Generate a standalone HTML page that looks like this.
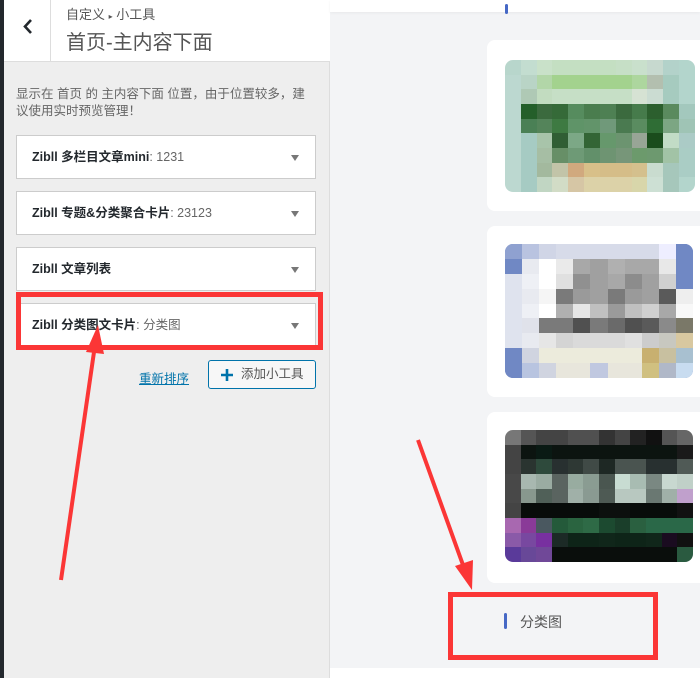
<!DOCTYPE html>
<html><head><meta charset="utf-8"><style>
*{margin:0;padding:0;box-sizing:border-box}
body{width:700px;height:678px;overflow:hidden;position:relative;background:#f3f4f6;font-family:"Liberation Sans","Noto Sans CJK SC",sans-serif}
.left{position:absolute;left:0;top:0;width:330px;height:678px;background:#eeeeee;border-right:1px solid #ddd}
.stripe{position:absolute;left:0;top:0;width:4px;height:678px;background:#23282d}
.hdr{position:absolute;left:4px;top:0;width:326px;height:62px;background:#fff;border-bottom:1px solid #ddd}
.back{position:absolute;left:0;top:0;width:47px;height:62px;border-right:1px solid #ddd}
.crumb{position:absolute;left:62px;top:4px;font-size:13px;color:#555}
.title{position:absolute;left:62px;top:26px;font-size:20px;color:#555}
.desc{position:absolute;left:16px;top:86px;width:300px;font-size:12.5px;color:#666;line-height:17px}
.w{position:absolute;left:16px;width:300px;height:44px;background:#fff;border:1px solid #ccc;font-size:12.5px;font-weight:bold;color:#23282d;padding-left:15px;line-height:42px}
.w span{color:#666;font-weight:normal}
.w:after{content:"";position:absolute;right:16px;top:19px;border-left:4px solid transparent;border-right:4px solid transparent;border-top:6px solid #777}
.red{position:absolute;border:5px solid #fb3636}
.link{position:absolute;left:139px;top:368px;font-size:12.5px;color:#0073aa;text-decoration:underline}
.btn{position:absolute;left:208px;top:360px;width:108px;height:29px;border:1px solid #0073aa;border-radius:3px;background:#f7f7f7;font-size:12.5px;color:#555;line-height:27px;padding-left:32px}
.topbar{position:absolute;left:330px;top:0;width:370px;height:12px;background:#fff;box-shadow:0 1px 3px rgba(0,0,0,.05)}
.card{position:absolute;left:487px;width:220px;height:171px;background:#fff;border-radius:8px}
.img{position:absolute;left:505px;display:grid;border-radius:8px;overflow:hidden}
.img i{display:block}
.bar{position:absolute;width:3px;height:14px;border-radius:2px;background:#4668c5}
.bottom{position:absolute;left:330px;top:668px;width:370px;height:10px;background:#fff}
</style></head><body>
<div class="left">
<div class="stripe"></div>
<div class="hdr"><div class="back"><svg width="47" height="62"><path d="M27 20 L21 26.5 L27 33" fill="none" stroke="#23282d" stroke-width="2.6"/></svg></div><div class="crumb">自定义 <span style="font-size:8px">▸</span> 小工具</div><div class="title">首页-主内容下面</div></div>
<div class="desc">显示在 首页 的 主内容下面 位置，由于位置较多，建议使用实时预览管理！</div>
<div class="w" style="top:135px">Zibll 多栏目文章mini<span>: 1231</span></div>
<div class="w" style="top:191px">Zibll 专题&amp;分类聚合卡片<span>: 23123</span></div>
<div class="w" style="top:247px">Zibll 文章列表</div>
<div class="w" style="top:303px">Zibll 分类图文卡片<span>: 分类图</span></div>
<div class="link">重新排序</div>
<div class="btn"><svg style="position:absolute;left:12px;top:8px" width="12" height="12"><path d="M6 0V12M0 6H12" stroke="#0073aa" stroke-width="2.6"/></svg>添加小工具</div>
</div>
<div class="topbar"></div>
<div class="bar" style="left:505px;top:4px;height:10px"></div>
<div class="card" style="top:40px"></div>
<div class="card" style="top:226px"></div>
<div class="card" style="top:412px"></div>
<div class="img" style="top:60px;width:190px;height:132px;grid-template-columns:repeat(12,1fr);grid-template-rows:repeat(9,1fr)">
<i style="background:#b8d6cc"></i><i style="background:#c3ddd0"></i><i style="background:#c9e1c9"></i><i style="background:#c4dfc2"></i><i style="background:#c4dfc2"></i><i style="background:#c4dfc2"></i><i style="background:#c4dfc2"></i><i style="background:#c6dfc6"></i><i style="background:#c9e0cc"></i><i style="background:#c7d9cf"></i><i style="background:#b3d2ca"></i><i style="background:#b3d5cc"></i>
<i style="background:#bcd8d0"></i><i style="background:#b9d4c6"></i><i style="background:#b2d6a8"></i><i style="background:#a3d28e"></i><i style="background:#a3d28e"></i><i style="background:#a3d28e"></i><i style="background:#a3d28e"></i><i style="background:#a3d28e"></i><i style="background:#add69e"></i><i style="background:#b3bfaf"></i><i style="background:#a6cbbf"></i><i style="background:#b3d5cc"></i>
<i style="background:#bcd8d0"></i><i style="background:#afc9b5"></i><i style="background:#c2dcc0"></i><i style="background:#c6dfc6"></i><i style="background:#c6dfc6"></i><i style="background:#c6dfc6"></i><i style="background:#c6dfc6"></i><i style="background:#c6dfc6"></i><i style="background:#d6e2d3"></i><i style="background:#cbdcd2"></i><i style="background:#a6cbbf"></i><i style="background:#b3d5cc"></i>
<i style="background:#bcd8d0"></i><i style="background:#245f2a"></i><i style="background:#3b6a3e"></i><i style="background:#356a38"></i><i style="background:#568c5e"></i><i style="background:#4a7d4e"></i><i style="background:#4e8053"></i><i style="background:#3b6a3e"></i><i style="background:#467b4b"></i><i style="background:#2c5f2e"></i><i style="background:#5a8a5e"></i><i style="background:#a3c8bd"></i>
<i style="background:#bcd8d0"></i><i style="background:#4a8055"></i><i style="background:#54845a"></i><i style="background:#3e7a42"></i><i style="background:#5f9468"></i><i style="background:#62946a"></i><i style="background:#70997a"></i><i style="background:#4a7a50"></i><i style="background:#5a8c60"></i><i style="background:#2f6d35"></i><i style="background:#7ca683"></i><i style="background:#9fc4b5"></i>
<i style="background:#bcd8d0"></i><i style="background:#a6cbc3"></i><i style="background:#a8c4aa"></i><i style="background:#305e34"></i><i style="background:#7ca886"></i><i style="background:#336535"></i><i style="background:#66986c"></i><i style="background:#6c9470"></i><i style="background:#98a596"></i><i style="background:#1a4c1c"></i><i style="background:#c2dcc6"></i><i style="background:#abcbc6"></i>
<i style="background:#bcd8d0"></i><i style="background:#a6cbc3"></i><i style="background:#a6bea4"></i><i style="background:#678f67"></i><i style="background:#6e9a76"></i><i style="background:#62906a"></i><i style="background:#6e9472"></i><i style="background:#779679"></i><i style="background:#6c9a6c"></i><i style="background:#6d996f"></i><i style="background:#a2c3a6"></i><i style="background:#aacdc5"></i>
<i style="background:#bcd8d0"></i><i style="background:#a6cbc3"></i><i style="background:#a3b99e"></i><i style="background:#c2c4a8"></i><i style="background:#d1a97e"></i><i style="background:#d8c089"></i><i style="background:#d5bd88"></i><i style="background:#d5bd88"></i><i style="background:#d4c08d"></i><i style="background:#c9dccf"></i><i style="background:#a6c7bb"></i><i style="background:#aacdc5"></i>
<i style="background:#bcd8d0"></i><i style="background:#a6cbc3"></i><i style="background:#c1d6c3"></i><i style="background:#d2dcc6"></i><i style="background:#d6c6a5"></i><i style="background:#dcd2a8"></i><i style="background:#dcd2a8"></i><i style="background:#dcd2a8"></i><i style="background:#d8d6aa"></i><i style="background:#cde0d4"></i><i style="background:#a6c7bb"></i><i style="background:#b3d5cc"></i>
</div>
<div class="img" style="top:244px;width:188px;height:134px;background:#6f86c4;grid-template-columns:repeat(11,1fr);grid-template-rows:repeat(9,1fr)">
<i style="background:#8fa1d0"></i><i style="background:#b9c3e0"></i><i style="background:#d0d5e6"></i><i style="background:#d7dbe9"></i><i style="background:#d7dbe9"></i><i style="background:#d7dbe9"></i><i style="background:#d7dbe9"></i><i style="background:#d7dbe9"></i><i style="background:#d7dbe9"></i><i style="background:#eef"></i><i style="background:#7088c4"></i>
<i style="background:#7088c4"></i><i style="background:#e8eaf0"></i><i style="background:#fff"></i><i style="background:#eaeaea"></i><i style="background:#a8a8a8"></i><i style="background:#a0a0a0"></i><i style="background:#b0b0b0"></i><i style="background:#a8a8a8"></i><i style="background:#a8a8a8"></i><i style="background:#e8e8e8"></i><i style="background:#7088c4"></i>
<i style="background:#dfe3ee"></i><i style="background:#eef0f5"></i><i style="background:#fff"></i><i style="background:#e0e0e0"></i><i style="background:#909090"></i><i style="background:#a0a0a0"></i><i style="background:#a8a8a8"></i><i style="background:#8c8c8c"></i><i style="background:#a0a0a0"></i><i style="background:#d0d0d0"></i><i style="background:#7088c4"></i>
<i style="background:#dfe3ee"></i><i style="background:#e8eaf0"></i><i style="background:#f5f5f5"></i><i style="background:#7a7a7a"></i><i style="background:#9a9a9a"></i><i style="background:#a0a0a0"></i><i style="background:#7a7a7a"></i><i style="background:#9a9a9a"></i><i style="background:#a0a0a0"></i><i style="background:#5a5a5a"></i><i style="background:#eee"></i>
<i style="background:#dfe3ee"></i><i style="background:#eef0f5"></i><i style="background:#fff"></i><i style="background:#b0b0b0"></i><i style="background:#e6e6e6"></i><i style="background:#c0c0c0"></i><i style="background:#9a9a9a"></i><i style="background:#c0c0c0"></i><i style="background:#d0d0d0"></i><i style="background:#a8a8a8"></i><i style="background:#f8f8f8"></i>
<i style="background:#dfe3ee"></i><i style="background:#e0e2ea"></i><i style="background:#7a7a7a"></i><i style="background:#7a7a7a"></i><i style="background:#505050"></i><i style="background:#7a7a7a"></i><i style="background:#6a6a6a"></i><i style="background:#505050"></i><i style="background:#5a5a5a"></i><i style="background:#8a8a8a"></i><i style="background:#7a7868"></i>
<i style="background:#dfe3ee"></i><i style="background:#e8eaf0"></i><i style="background:#e6e6e6"></i><i style="background:#d4d4d4"></i><i style="background:#dadada"></i><i style="background:#dadada"></i><i style="background:#dadada"></i><i style="background:#e0e0e0"></i><i style="background:#cccccc"></i><i style="background:#c8c8c0"></i><i style="background:#d8c8a0"></i>
<i style="background:#7088c4"></i><i style="background:#d0d4e0"></i><i style="background:#ecebdc"></i><i style="background:#ecebdc"></i><i style="background:#ecebdc"></i><i style="background:#ecebdc"></i><i style="background:#ecebdc"></i><i style="background:#ecebdc"></i><i style="background:#c8b070"></i><i style="background:#c8c0a0"></i><i style="background:#a8c0d0"></i>
<i style="background:#7088c4"></i><i style="background:#b8c4e0"></i><i style="background:#d0d4e0"></i><i style="background:#e8e6dc"></i><i style="background:#e8e6dc"></i><i style="background:#c0c8e0"></i><i style="background:#e8e6dc"></i><i style="background:#e8e6dc"></i><i style="background:#d0c080"></i><i style="background:#b0b8c8"></i><i style="background:#c8dcf0"></i>
</div>
<div class="img" style="top:430px;width:188px;height:132px;grid-template-columns:repeat(12,1fr);grid-template-rows:repeat(9,1fr)">
<i style="background:#777"></i><i style="background:#555"></i><i style="background:#444"></i><i style="background:#444"></i><i style="background:#505050"></i><i style="background:#505050"></i><i style="background:#333"></i><i style="background:#444"></i><i style="background:#222"></i><i style="background:#111"></i><i style="background:#555"></i><i style="background:#666"></i>
<i style="background:#444"></i><i style="background:#0c1410"></i><i style="background:#0a1a14"></i><i style="background:#0c1410"></i><i style="background:#0c1410"></i><i style="background:#0c1410"></i><i style="background:#0c1410"></i><i style="background:#0c1410"></i><i style="background:#0c1410"></i><i style="background:#0c1410"></i><i style="background:#0c1410"></i><i style="background:#1a1a1a"></i>
<i style="background:#444"></i><i style="background:#2a3430"></i><i style="background:#2e4a3c"></i><i style="background:#283030"></i><i style="background:#2e3834"></i><i style="background:#404a46"></i><i style="background:#1e2824"></i><i style="background:#4a5450"></i><i style="background:#4a5450"></i><i style="background:#283030"></i><i style="background:#283030"></i><i style="background:#505a56"></i>
<i style="background:#484848"></i><i style="background:#a8b8b0"></i><i style="background:#9aaca2"></i><i style="background:#5a6460"></i><i style="background:#98aca0"></i><i style="background:#8a9c92"></i><i style="background:#4a5650"></i><i style="background:#c8dcd2"></i><i style="background:#a8bcb2"></i><i style="background:#7a8882"></i><i style="background:#c8d8d0"></i><i style="background:#c0d0c8"></i>
<i style="background:#484848"></i><i style="background:#88988e"></i><i style="background:#506058"></i><i style="background:#5a6460"></i><i style="background:#a0b0a8"></i><i style="background:#8a9a92"></i><i style="background:#4e5a54"></i><i style="background:#b8c8c0"></i><i style="background:#b8c8c0"></i><i style="background:#6a7872"></i><i style="background:#a0b0a8"></i><i style="background:#c0a0cc"></i>
<i style="background:#444"></i><i style="background:#080c0a"></i><i style="background:#080c0a"></i><i style="background:#080c0a"></i><i style="background:#080c0a"></i><i style="background:#080c0a"></i><i style="background:#0c100e"></i><i style="background:#0c100e"></i><i style="background:#080c0a"></i><i style="background:#080c0a"></i><i style="background:#080c0a"></i><i style="background:#111"></i>
<i style="background:#a868b0"></i><i style="background:#8a3a98"></i><i style="background:#4a5860"></i><i style="background:#245a3a"></i><i style="background:#2a6440"></i><i style="background:#2e6a46"></i><i style="background:#1c4a30"></i><i style="background:#1a3e2a"></i><i style="background:#2a6040"></i><i style="background:#2a6848"></i><i style="background:#2a6848"></i><i style="background:#2a6848"></i>
<i style="background:#8a5aa8"></i><i style="background:#7848a0"></i><i style="background:#7830a0"></i><i style="background:#1c2a26"></i><i style="background:#0e2418"></i><i style="background:#0e2418"></i><i style="background:#10261a"></i><i style="background:#0e2418"></i><i style="background:#0e2418"></i><i style="background:#10261a"></i><i style="background:#1a0c20"></i><i style="background:#111"></i>
<i style="background:#5a3a9a"></i><i style="background:#684898"></i><i style="background:#704898"></i><i style="background:#0a0e0c"></i><i style="background:#0a0e0c"></i><i style="background:#0a0e0c"></i><i style="background:#0a0e0c"></i><i style="background:#0a0e0c"></i><i style="background:#0a0e0c"></i><i style="background:#0a0e0c"></i><i style="background:#0a0e0c"></i><i style="background:#2a5a40"></i>
</div>
<div class="bar" style="left:504px;top:613px;height:16px"></div>
<div style="position:absolute;left:520px;top:612px;font-size:14px;color:#555">分类图</div>
<div class="bottom"></div>
<div class="red" style="left:16px;top:292px;width:307px;height:58px"></div>
<div class="red" style="left:448px;top:592px;width:210px;height:68px"></div>
<svg style="position:absolute;left:0;top:0" width="700" height="678">
<line x1="61" y1="580" x2="94" y2="352" stroke="#fb3636" stroke-width="4"/>
<polygon points="98,325 86,352 104,354" fill="#fb3636"/>
<line x1="418" y1="440" x2="463" y2="565" stroke="#fb3636" stroke-width="4"/>
<polygon points="472,590 455,566 473,560" fill="#fb3636"/>
</svg>
</body></html>
